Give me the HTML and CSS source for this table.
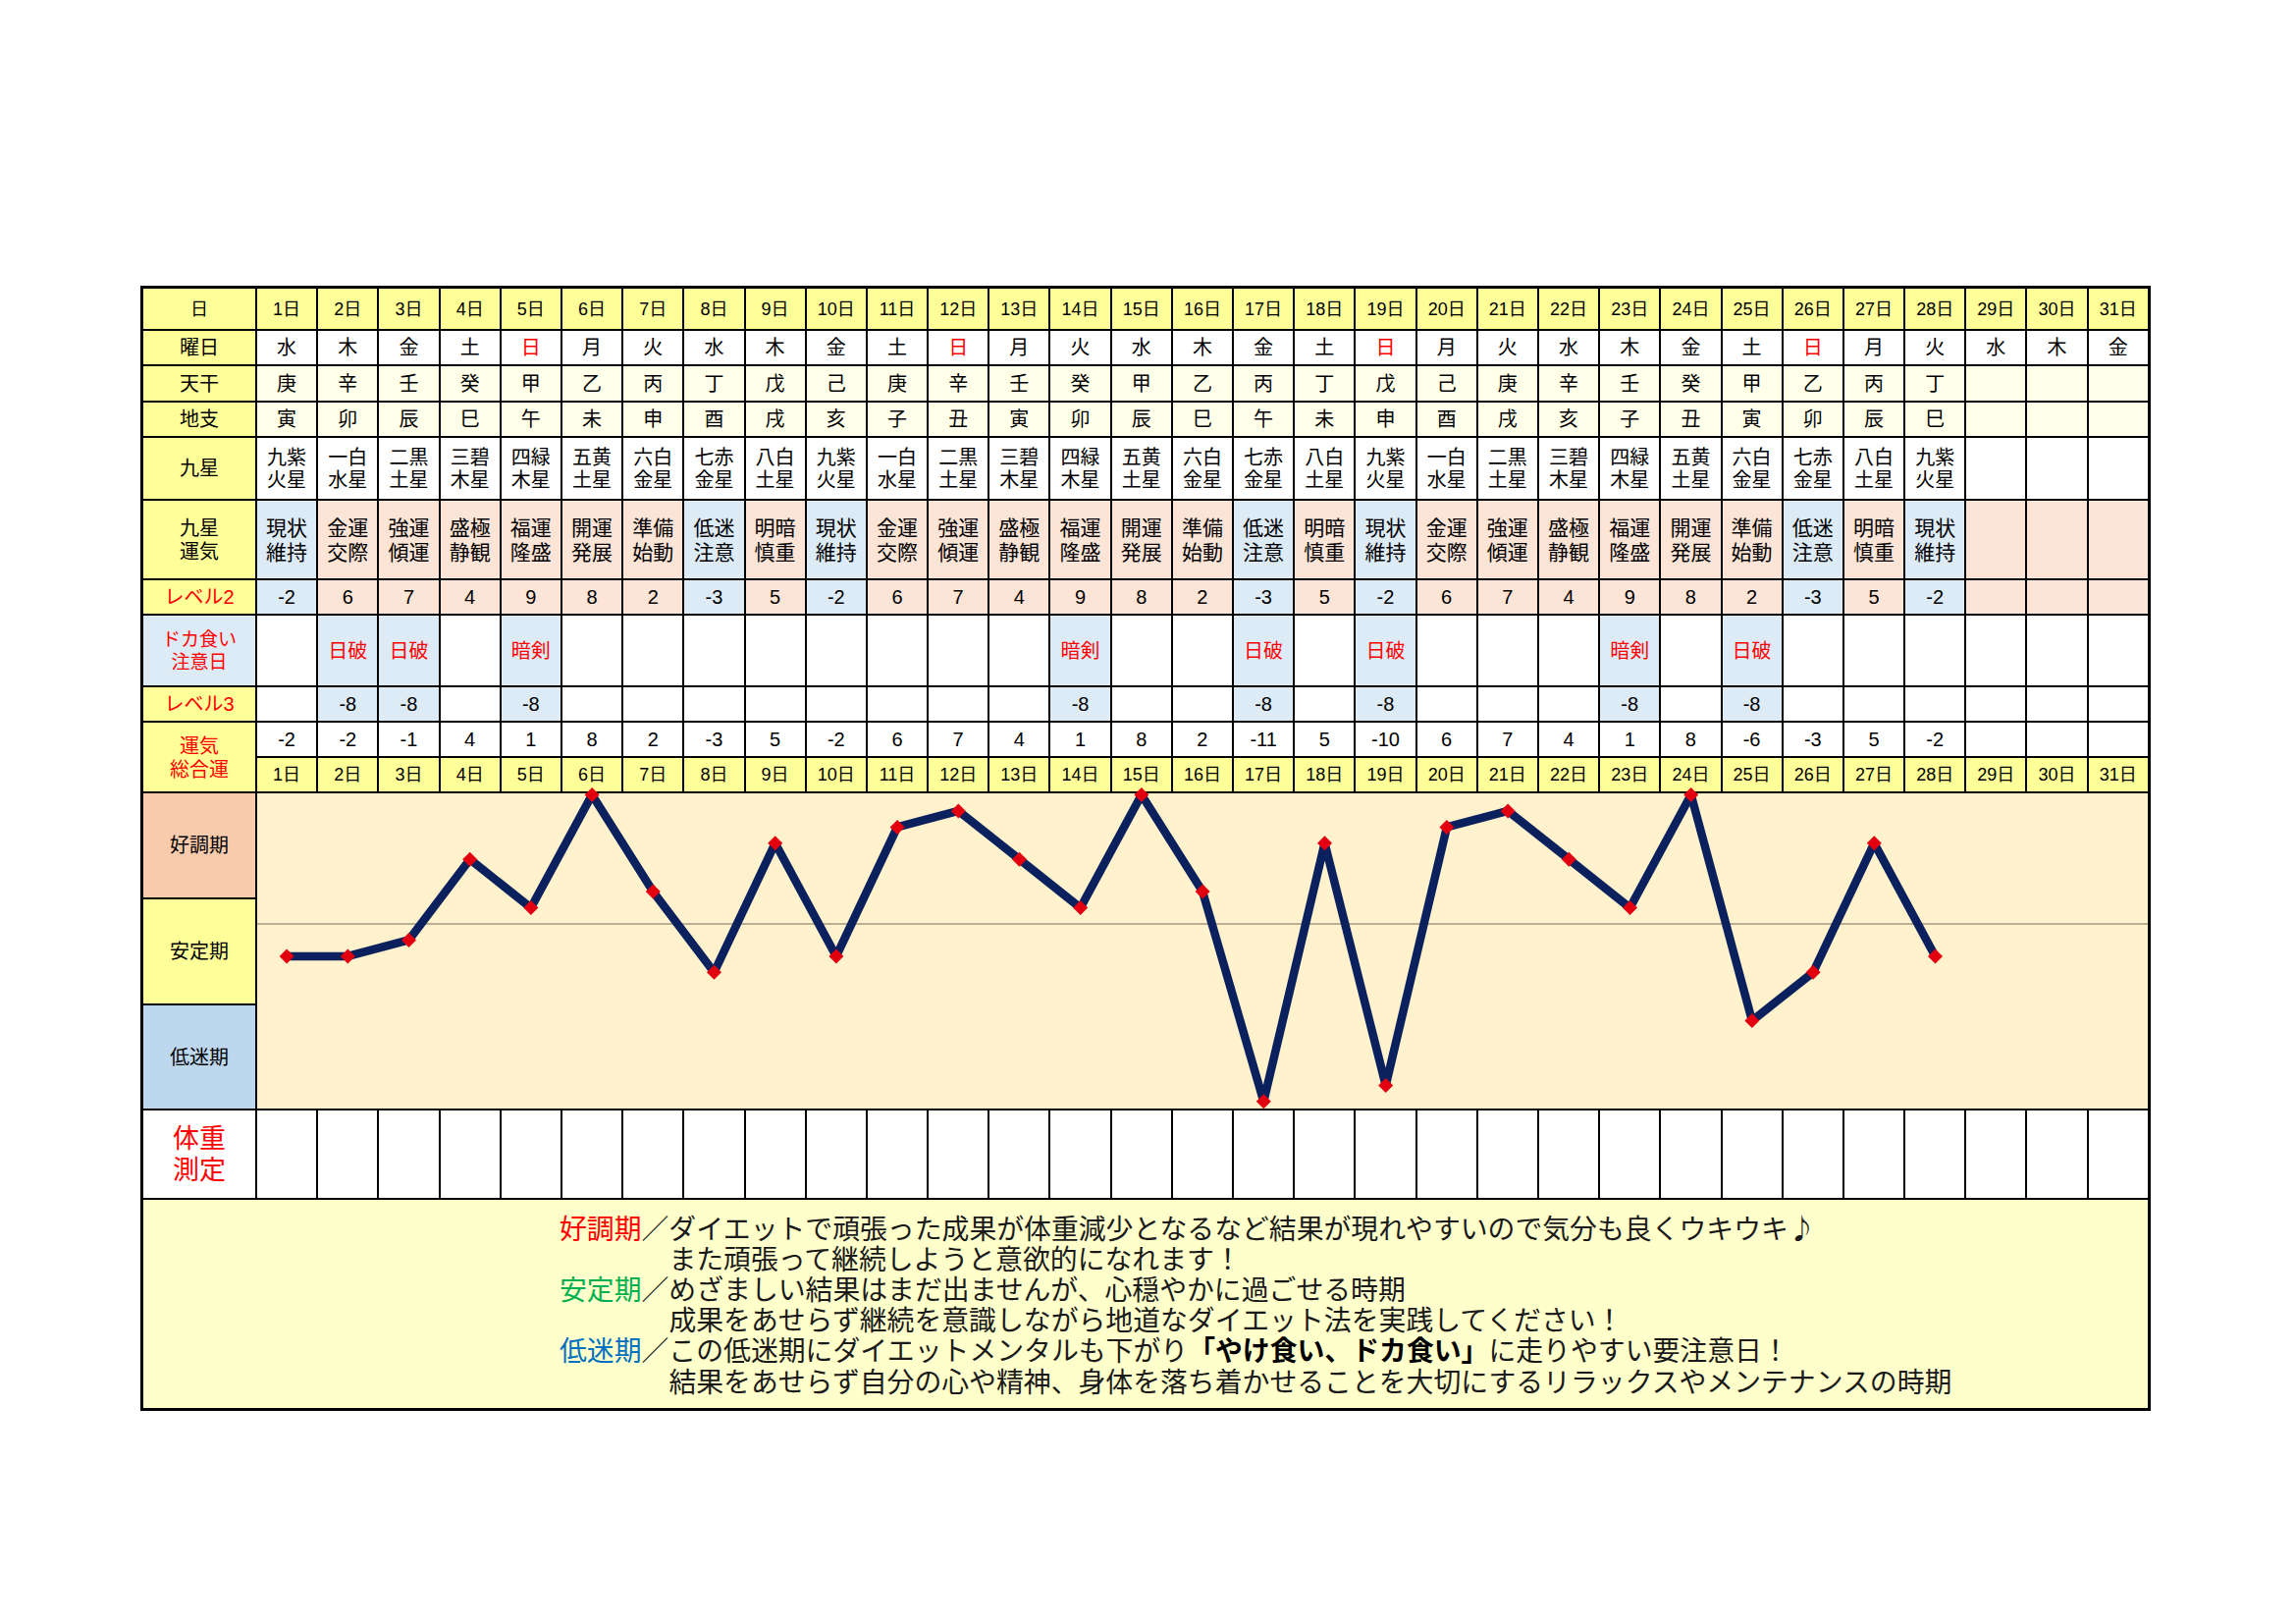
FILE: index.html
```html
<!DOCTYPE html>
<html lang="ja">
<head>
<meta charset="utf-8">
<title>ダイエット運気カレンダー</title>
<link rel="stylesheet" href="styles.css">
</head>
<body>
<div class="sheet">
<!-- row 1: 日 -->
<div class="c y d">日</div>
<div class="c y d">1日</div><div class="c y d">2日</div><div class="c y d">3日</div><div class="c y d">4日</div><div class="c y d">5日</div><div class="c y d">6日</div><div class="c y d">7日</div><div class="c y d">8日</div><div class="c y d">9日</div><div class="c y d">10日</div><div class="c y d">11日</div><div class="c y d">12日</div><div class="c y d">13日</div><div class="c y d">14日</div><div class="c y d">15日</div><div class="c y d">16日</div><div class="c y d">17日</div><div class="c y d">18日</div><div class="c y d">19日</div><div class="c y d">20日</div><div class="c y d">21日</div><div class="c y d">22日</div><div class="c y d">23日</div><div class="c y d">24日</div><div class="c y d">25日</div><div class="c y d">26日</div><div class="c y d">27日</div><div class="c y d">28日</div><div class="c y d">29日</div><div class="c y d">30日</div><div class="c y d">31日</div>
<!-- row 2: 曜日 -->
<div class="c y lb">曜日</div>
<div class="c">水</div><div class="c">木</div><div class="c">金</div><div class="c">土</div><div class="c r">日</div><div class="c">月</div><div class="c">火</div>
<div class="c">水</div><div class="c">木</div><div class="c">金</div><div class="c">土</div><div class="c r">日</div><div class="c">月</div><div class="c">火</div>
<div class="c">水</div><div class="c">木</div><div class="c">金</div><div class="c">土</div><div class="c r">日</div><div class="c">月</div><div class="c">火</div>
<div class="c">水</div><div class="c">木</div><div class="c">金</div><div class="c">土</div><div class="c r">日</div><div class="c">月</div><div class="c">火</div>
<div class="c">水</div><div class="c">木</div><div class="c">金</div>
<!-- row 3: 天干 -->
<div class="c y lb">天干</div>
<div class="c py">庚</div><div class="c py">辛</div><div class="c py">壬</div><div class="c py">癸</div><div class="c py">甲</div><div class="c py">乙</div><div class="c py">丙</div><div class="c py">丁</div><div class="c py">戊</div><div class="c py">己</div>
<div class="c py">庚</div><div class="c py">辛</div><div class="c py">壬</div><div class="c py">癸</div><div class="c py">甲</div><div class="c py">乙</div><div class="c py">丙</div><div class="c py">丁</div><div class="c py">戊</div><div class="c py">己</div>
<div class="c py">庚</div><div class="c py">辛</div><div class="c py">壬</div><div class="c py">癸</div><div class="c py">甲</div><div class="c py">乙</div><div class="c py">丙</div><div class="c py">丁</div>
<div class="c py"></div><div class="c py"></div><div class="c py"></div>
<!-- row 4: 地支 -->
<div class="c y lb">地支</div>
<div class="c py">寅</div><div class="c py">卯</div><div class="c py">辰</div><div class="c py">巳</div><div class="c py">午</div><div class="c py">未</div><div class="c py">申</div><div class="c py">酉</div><div class="c py">戌</div><div class="c py">亥</div><div class="c py">子</div><div class="c py">丑</div>
<div class="c py">寅</div><div class="c py">卯</div><div class="c py">辰</div><div class="c py">巳</div><div class="c py">午</div><div class="c py">未</div><div class="c py">申</div><div class="c py">酉</div><div class="c py">戌</div><div class="c py">亥</div><div class="c py">子</div><div class="c py">丑</div>
<div class="c py">寅</div><div class="c py">卯</div><div class="c py">辰</div><div class="c py">巳</div>
<div class="c py"></div><div class="c py"></div><div class="c py"></div>
<!-- row 5: 九星 -->
<div class="c y lb">九星</div>
<div class="c k2">九紫<br>火星</div><div class="c k2">一白<br>水星</div><div class="c k2">二黒<br>土星</div><div class="c k2">三碧<br>木星</div><div class="c k2">四緑<br>木星</div><div class="c k2">五黄<br>土星</div><div class="c k2">六白<br>金星</div><div class="c k2">七赤<br>金星</div><div class="c k2">八白<br>土星</div>
<div class="c k2">九紫<br>火星</div><div class="c k2">一白<br>水星</div><div class="c k2">二黒<br>土星</div><div class="c k2">三碧<br>木星</div><div class="c k2">四緑<br>木星</div><div class="c k2">五黄<br>土星</div><div class="c k2">六白<br>金星</div><div class="c k2">七赤<br>金星</div><div class="c k2">八白<br>土星</div>
<div class="c k2">九紫<br>火星</div><div class="c k2">一白<br>水星</div><div class="c k2">二黒<br>土星</div><div class="c k2">三碧<br>木星</div><div class="c k2">四緑<br>木星</div><div class="c k2">五黄<br>土星</div><div class="c k2">六白<br>金星</div><div class="c k2">七赤<br>金星</div><div class="c k2">八白<br>土星</div>
<div class="c k2">九紫<br>火星</div>
<div class="c"></div><div class="c"></div><div class="c"></div>
<!-- row 6: 九星運気 -->
<div class="c y lb l2">九星<br>運気</div>
<div class="c bl un">現状<br>維持</div><div class="c pk un">金運<br>交際</div><div class="c pk un">強運<br>傾運</div><div class="c pk un">盛極<br>静観</div><div class="c pk un">福運<br>隆盛</div><div class="c pk un">開運<br>発展</div><div class="c pk un">準備<br>始動</div><div class="c bl un">低迷<br>注意</div><div class="c pk un">明暗<br>慎重</div>
<div class="c bl un">現状<br>維持</div><div class="c pk un">金運<br>交際</div><div class="c pk un">強運<br>傾運</div><div class="c pk un">盛極<br>静観</div><div class="c pk un">福運<br>隆盛</div><div class="c pk un">開運<br>発展</div><div class="c pk un">準備<br>始動</div><div class="c bl un">低迷<br>注意</div><div class="c pk un">明暗<br>慎重</div>
<div class="c bl un">現状<br>維持</div><div class="c pk un">金運<br>交際</div><div class="c pk un">強運<br>傾運</div><div class="c pk un">盛極<br>静観</div><div class="c pk un">福運<br>隆盛</div><div class="c pk un">開運<br>発展</div><div class="c pk un">準備<br>始動</div><div class="c bl un">低迷<br>注意</div><div class="c pk un">明暗<br>慎重</div>
<div class="c bl un">現状<br>維持</div>
<div class="c pk"></div><div class="c pk"></div><div class="c pk"></div>
<!-- row 7: レベル2 -->
<div class="c y r lb">レベル2</div>
<div class="c bl">-2</div><div class="c pk">6</div><div class="c pk">7</div><div class="c pk">4</div><div class="c pk">9</div><div class="c pk">8</div><div class="c pk">2</div><div class="c bl">-3</div><div class="c pk">5</div>
<div class="c bl">-2</div><div class="c pk">6</div><div class="c pk">7</div><div class="c pk">4</div><div class="c pk">9</div><div class="c pk">8</div><div class="c pk">2</div><div class="c bl">-3</div><div class="c pk">5</div>
<div class="c bl">-2</div><div class="c pk">6</div><div class="c pk">7</div><div class="c pk">4</div><div class="c pk">9</div><div class="c pk">8</div><div class="c pk">2</div><div class="c bl">-3</div><div class="c pk">5</div>
<div class="c bl">-2</div>
<div class="c pk"></div><div class="c pk"></div><div class="c pk"></div>
<!-- row 8: ドカ食い注意日 -->
<div class="c bl r lb dk">ドカ食い<br>注意日</div>
<div class="c"></div><div class="c bl r">日破</div><div class="c bl r">日破</div><div class="c"></div><div class="c bl r">暗剣</div><div class="c"></div><div class="c"></div><div class="c"></div><div class="c"></div>
<div class="c"></div><div class="c"></div><div class="c"></div><div class="c"></div><div class="c bl r">暗剣</div><div class="c"></div><div class="c"></div><div class="c bl r">日破</div><div class="c"></div>
<div class="c bl r">日破</div><div class="c"></div><div class="c"></div><div class="c"></div><div class="c bl r">暗剣</div><div class="c"></div><div class="c bl r">日破</div><div class="c"></div><div class="c"></div>
<div class="c"></div>
<div class="c"></div><div class="c"></div><div class="c"></div>
<!-- row 9: レベル3 -->
<div class="c y r lb">レベル3</div>
<div class="c"></div><div class="c bl">-8</div><div class="c bl">-8</div><div class="c"></div><div class="c bl">-8</div><div class="c"></div><div class="c"></div><div class="c"></div><div class="c"></div>
<div class="c"></div><div class="c"></div><div class="c"></div><div class="c"></div><div class="c bl">-8</div><div class="c"></div><div class="c"></div><div class="c bl">-8</div><div class="c"></div>
<div class="c bl">-8</div><div class="c"></div><div class="c"></div><div class="c"></div><div class="c bl">-8</div><div class="c"></div><div class="c bl">-8</div><div class="c"></div><div class="c"></div>
<div class="c"></div>
<div class="c"></div><div class="c"></div><div class="c"></div>
<!-- row 10-11: 運気総合運 -->
<div class="c y r lb l2 rs2">運気<br>総合運</div>
<div class="c">-2</div><div class="c">-2</div><div class="c">-1</div><div class="c">4</div><div class="c">1</div><div class="c">8</div><div class="c">2</div><div class="c">-3</div><div class="c">5</div>
<div class="c">-2</div><div class="c">6</div><div class="c">7</div><div class="c">4</div><div class="c">1</div><div class="c">8</div><div class="c">2</div><div class="c">-11</div><div class="c">5</div>
<div class="c">-10</div><div class="c">6</div><div class="c">7</div><div class="c">4</div><div class="c">1</div><div class="c">8</div><div class="c">-6</div><div class="c">-3</div><div class="c">5</div>
<div class="c">-2</div>
<div class="c"></div><div class="c"></div><div class="c"></div>
<div class="c y d">1日</div><div class="c y d">2日</div><div class="c y d">3日</div><div class="c y d">4日</div><div class="c y d">5日</div><div class="c y d">6日</div><div class="c y d">7日</div><div class="c y d">8日</div><div class="c y d">9日</div><div class="c y d">10日</div><div class="c y d">11日</div><div class="c y d">12日</div><div class="c y d">13日</div><div class="c y d">14日</div><div class="c y d">15日</div><div class="c y d">16日</div><div class="c y d">17日</div><div class="c y d">18日</div><div class="c y d">19日</div><div class="c y d">20日</div><div class="c y d">21日</div><div class="c y d">22日</div><div class="c y d">23日</div><div class="c y d">24日</div><div class="c y d">25日</div><div class="c y d">26日</div><div class="c y d">27日</div><div class="c y d">28日</div><div class="c y d">29日</div><div class="c y d">30日</div><div class="c y d">31日</div>
<!-- rows 12-14: chart -->
<div class="c good lb">好調期</div>
<div class="chart">
<svg class="plot" width="1926" height="321" viewBox="0 0 1926 321">
<defs><path id="mk" d="M0 -7.5L7.5 0L0 7.5L-7.5 0Z" fill="#e20010"/></defs>
<line x1="0" y1="133" x2="1926" y2="133" stroke="#b9ae94" stroke-width="2"/>
<polyline fill="none" stroke="#0b215e" stroke-width="8.5" stroke-linejoin="round" stroke-linecap="round" points="30.1,165.9 92.3,165.9 154.5,149.4 216.7,67.2 278.9,116.6 341.1,1.5 403.3,100.1 465.5,182.3 527.7,50.8 589.9,165.9 652.1,34.4 714.3,17.9 776.5,67.2 838.7,116.6 900.9,1.5 963.1,100.1 1025.3,313.8 1087.5,50.8 1149.7,297.4 1211.9,34.4 1274.1,17.9 1336.3,67.2 1398.5,116.6 1460.7,1.5 1522.9,231.6 1585.1,182.3 1647.3,50.8 1709.5,165.9"/>
<use href="#mk" x="30.1" y="165.9"/><use href="#mk" x="92.3" y="165.9"/><use href="#mk" x="154.5" y="149.4"/><use href="#mk" x="216.7" y="67.2"/><use href="#mk" x="278.9" y="116.6"/><use href="#mk" x="341.1" y="1.5"/><use href="#mk" x="403.3" y="100.1"/><use href="#mk" x="465.5" y="182.3"/><use href="#mk" x="527.7" y="50.8"/><use href="#mk" x="589.9" y="165.9"/><use href="#mk" x="652.1" y="34.4"/><use href="#mk" x="714.3" y="17.9"/><use href="#mk" x="776.5" y="67.2"/><use href="#mk" x="838.7" y="116.6"/><use href="#mk" x="900.9" y="1.5"/><use href="#mk" x="963.1" y="100.1"/><use href="#mk" x="1025.3" y="313.8"/><use href="#mk" x="1087.5" y="50.8"/><use href="#mk" x="1149.7" y="297.4"/><use href="#mk" x="1211.9" y="34.4"/><use href="#mk" x="1274.1" y="17.9"/><use href="#mk" x="1336.3" y="67.2"/><use href="#mk" x="1398.5" y="116.6"/><use href="#mk" x="1460.7" y="1.5"/><use href="#mk" x="1522.9" y="231.6"/><use href="#mk" x="1585.1" y="182.3"/><use href="#mk" x="1647.3" y="50.8"/><use href="#mk" x="1709.5" y="165.9"/>
</svg>
</div>
<div class="c y lb">安定期</div>
<div class="c low lb">低迷期</div>
<!-- row 15: 体重測定 -->
<div class="c r wt">体重<br>測定</div>
<div class="c"></div><div class="c"></div><div class="c"></div><div class="c"></div><div class="c"></div><div class="c"></div><div class="c"></div><div class="c"></div><div class="c"></div><div class="c"></div>
<div class="c"></div><div class="c"></div><div class="c"></div><div class="c"></div><div class="c"></div><div class="c"></div><div class="c"></div><div class="c"></div><div class="c"></div><div class="c"></div>
<div class="c"></div><div class="c"></div><div class="c"></div><div class="c"></div><div class="c"></div><div class="c"></div><div class="c"></div><div class="c"></div><div class="c"></div><div class="c"></div>
<div class="c"></div>
<!-- row 16: note -->
<div class="note">
<div class="ln"><span class="t-good">好調期</span>／ダイエットで頑張った成果が体重減少となるなど結果が現れやすいので気分も良くウキウキ<span class="cjk">♪</span></div>
<div class="ln ind">また頑張って継続しようと意欲的になれます！</div>
<div class="ln"><span class="t-mid">安定期</span>／めざましい結果はまだ出ませんが、心穏やかに過ごせる時期</div>
<div class="ln ind">成果をあせらず継続を意識しながら地道なダイエット法を実践してください！</div>
<div class="ln"><span class="t-low">低迷期</span>／この低迷期にダイエットメンタルも下がり<b>「やけ食い、ドカ食い」</b>に走りやすい要注意日！</div>
<div class="ln ind">結果をあせらず自分の心や精神、身体を落ち着かせることを大切にするリラックスやメンテナンスの時期</div>
</div>
</div>
</body>
</html>
```

FILE: styles.css
```css
html, body {
  margin: 0;
  padding: 0;
  background: #ffffff;
}

body {
  font-family: "Liberation Sans", "Noto Sans CJK JP", "Noto Sans CJK SC", sans-serif;
  color: #000000;
}

.sheet {
  display: grid;
  grid-template-columns: 114px repeat(31, 60.2px);
  grid-template-rows: 41px 34px 35px 34px 62px 79px 34px 71px 34px 34px 34px 106px 106px 105px 89px 212px;
  gap: 2px;
  background: #000000;
  border: 3px solid #000000;
  width: max-content;
  margin: 291px 0 0 143px;
}

.c {
  background: #ffffff;
  display: flex;
  align-items: center;
  justify-content: center;
  text-align: center;
  font-size: 20px;
  line-height: 23px;
  padding-top: 1px;
  box-sizing: border-box;
  white-space: nowrap;
}

.y { background: #ffff99; }
.py { background: #ffffea; }
.pk { background: #fce4d6; }
.bl { background: #ddebf7; }
.good { background: #f8cbad; }
.low { background: #bdd7ee; }
.r { color: #ff0000; }

.d { font-size: 18px; }
.lb { font-size: 20px; }
.l2 { line-height: 24px; }
.dk { font-size: 19px; line-height: 23px; }
.k2 { line-height: 23px; }
.un { font-size: 21px; line-height: 25px; }
.rs2 { grid-row: span 2; }

.wt {
  font-size: 27px;
  line-height: 32px;
}

.chart {
  grid-column: span 31;
  grid-row: span 3;
  background: #fff2cc;
  position: relative;
}

.plot {
  display: block;
  overflow: visible;
}

.note {
  grid-column: span 32;
  background: #ffffcc;
  padding: 14.5px 0 0 424px;
  font-size: 27.85px;
  line-height: 31.2px;
  color: #1a1a1a;
  white-space: nowrap;
}

.ln.ind { padding-left: 4em; }
.note b { font-weight: 700; color: #000; }
.cjk { font-family: "Noto Sans CJK JP", sans-serif; line-height: 20px; }
.t-good { color: #ff0000; }
.t-mid { color: #00b050; }
.t-low { color: #0070c0; }
```
